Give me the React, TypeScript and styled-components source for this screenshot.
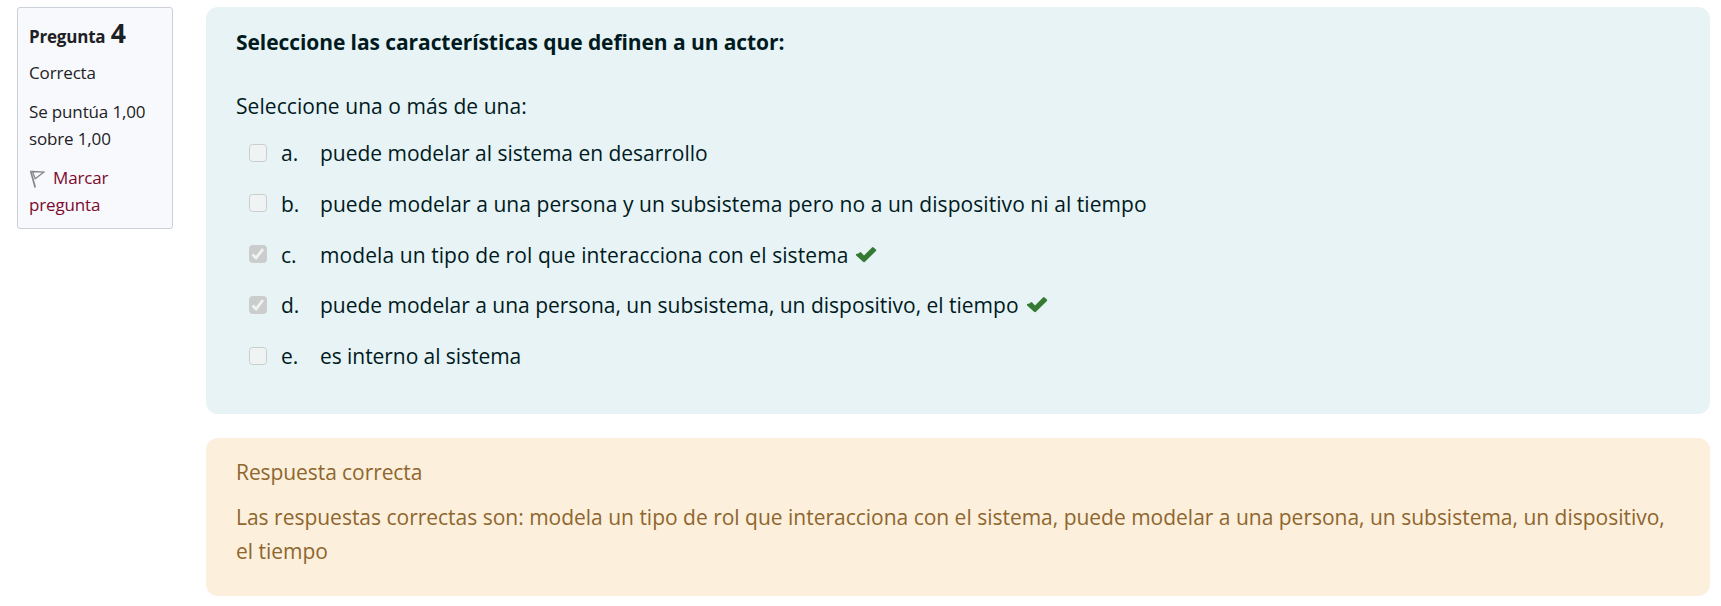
import React from 'react';
import styled, { createGlobalStyle } from 'styled-components';

const Global = createGlobalStyle`
  *, *::before, *::after { box-sizing: border-box; }
  body { margin: 0; background: #fff; font-family: "Open Sans", "Noto Sans", sans-serif; }
  p, h3, h4 { margin: 0; }
`;

const Page = styled.main`
  display: flex;
  align-items: flex-start;
  gap: 33px;
  padding: 7px 11px 0 17px;
`;

const Info = styled.aside`
  flex: none;
  width: 156px;
  height: 222px;
  padding: 15px 11px;
  border: 1px solid #cad0d7;
  border-radius: 3px;
  background: #f8f9fc;
  color: #1d2125;
  font-size: 17px;
  line-height: 27px;
  letter-spacing: -0.15px;
  white-space: nowrap;
`;

const QuestionNo = styled.h3`
  height: 27px;
  margin-bottom: 9px;
  font-size: 17px;
  font-weight: 700;
  letter-spacing: -0.2px;
`;

const Digit = styled.span`
  margin-left: 1px;
  font-size: 26.5px;
  line-height: 0;
`;

const InfoText = styled.p`
  margin-bottom: 12px;
`;

const FlagLink = styled.a`
  display: block;
  color: #7d0a2c;
`;

const FlagIcon = styled.svg`
  width: 16px;
  height: 18px;
  margin-right: 8px;
  vertical-align: -4px;
`;

const Content = styled.div`
  flex: 1;
  display: flex;
  flex-direction: column;
  gap: 24px;
`;

const Panel = styled.section<{ $tone: 'question' | 'feedback' }>`
  height: ${p => (p.$tone === 'question' ? 407 : 158)}px;
  padding: ${p => (p.$tone === 'question' ? 18 : 17)}px 29px 0 30px;
  border-radius: 12px;
  background: ${p => (p.$tone === 'question' ? '#e7f3f5' : '#fcefdc')};
  color: ${p => (p.$tone === 'question' ? '#001a1e' : '#8e662e')};
  font-size: 21px;
  line-height: 34px;
`;

const Line = styled.p<{ $spacing?: number }>`
  letter-spacing: ${p => p.$spacing ?? 0}px;
`;

const Title = styled.h4`
  margin-bottom: 30px;
  font-size: 21px;
  font-weight: 700;
  letter-spacing: -0.08px;
`;

const Answers = styled.div`
  display: flex;
  flex-direction: column;
  gap: 16.8px;
  margin-top: 13px;
  padding-left: 13px;
`;

const Answer = styled.label`
  display: flex;
  height: 34px;
`;

const Box = styled.span<{ $checked: boolean }>`
  flex: none;
  width: 18px;
  height: 18px;
  margin: 7.5px 14px 0 0;
  border: 1.5px solid #cbcdcd;
  border-radius: 3.5px;
  background: ${p => (p.$checked ? '#cbcdcd' : '#f0f3f4')};
  svg { display: block; width: 16px; height: 16px; }
`;

const Letter = styled.span`
  flex: none;
  width: 39px;
`;

const Correct = styled.svg`
  width: 22px;
  height: 17px;
  margin: 8px 0 0 7px;
`;

const Feedback = styled(Line)`
  margin-top: 11px;
`;

const answers = [
  { id: 'a', text: 'puede modelar al sistema en desarrollo', checked: false, spacing: -0.02 },
  { id: 'b', text: 'puede modelar a una persona y un subsistema pero no a un dispositivo ni al tiempo', checked: false, spacing: 0.06 },
  { id: 'c', text: 'modela un tipo de rol que interacciona con el sistema', checked: true, spacing: 0.08 },
  { id: 'd', text: 'puede modelar a una persona, un subsistema, un dispositivo, el tiempo', checked: true, spacing: -0.01 },
  { id: 'e', text: 'es interno al sistema', checked: false, spacing: -0.06 },
];

export default function App() {
  return (
    <>
      <Global />
      <Page>
        <Info>
          <QuestionNo>Pregunta <Digit>4</Digit></QuestionNo>
          <InfoText>Correcta</InfoText>
          <InfoText>Se puntúa 1,00<br />sobre 1,00</InfoText>
          <FlagLink>
            <FlagIcon viewBox="0 0 16 18" fill="none" stroke="#858585">
              <path d="M1.6 0.8 6.2 17.4" strokeWidth="1.7" />
              <path d="M3.4 1.5 15 2 6.2 8.8Z" strokeWidth="1.3" />
            </FlagIcon>
            Marcar<br />pregunta
          </FlagLink>
        </Info>
        <Content>
          <Panel $tone="question">
            <Title>Seleccione las características que definen a un actor:</Title>
            <Line $spacing={0.06}>Seleccione una o más de una:</Line>
            <Answers>
              {answers.map(a => (
                <Answer key={a.id}>
                  <Box $checked={a.checked}>
                    {a.checked && (
                      <svg viewBox="0 0 16 16" fill="none" stroke="#f0f3f4" strokeWidth="2.8">
                        <path d="M2.5 8.4 6.1 12 13 3" />
                      </svg>
                    )}
                  </Box>
                  <Letter>{a.id}.</Letter>
                  <Line $spacing={a.spacing}>{a.text}</Line>
                  {a.checked && (
                    <Correct viewBox="0 0 22 17">
                      <path
                        d="M3.4 7.4 5 6.2Q5.6 5.8 6.2 6.4L9 9.4 17 1.4Q17.8 .7 18.6 1.4L20.9 3.4Q21.6 4.2 20.9 5L10 15.8Q9 16.6 8 15.8L1.2 9.4Q.5 8.7 1.2 8.1Z"
                        fill="#357a32"
                      />
                    </Correct>
                  )}
                </Answer>
              ))}
            </Answers>
          </Panel>
          <Panel $tone="feedback">
            <Line $spacing={-0.08}>Respuesta correcta</Line>
            <Feedback $spacing={-0.01}>
              Las respuestas correctas son: modela un tipo de rol que interacciona con el sistema, puede modelar a una persona, un subsistema, un dispositivo,
              el tiempo
            </Feedback>
          </Panel>
        </Content>
      </Page>
    </>
  );
}
